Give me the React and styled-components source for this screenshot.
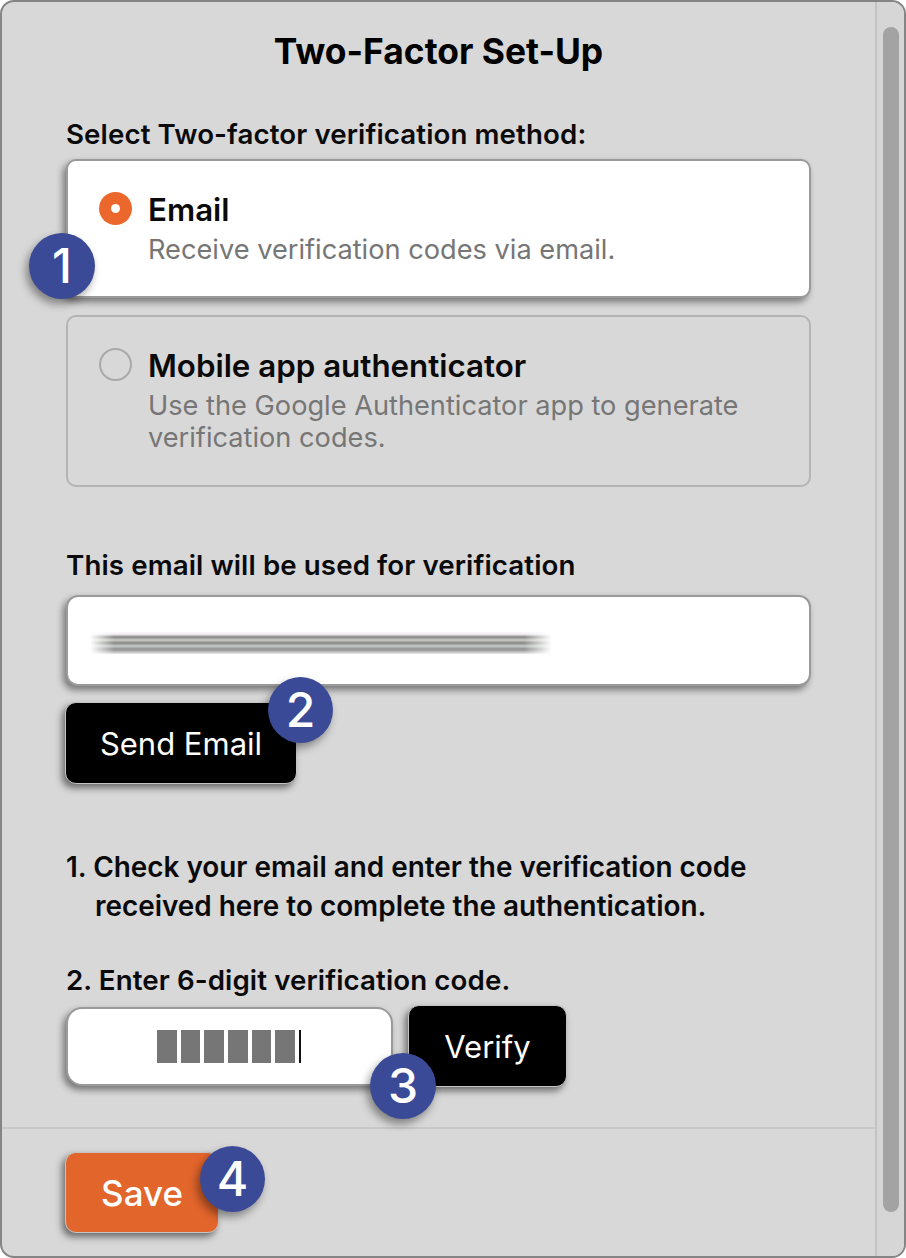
import styled, { createGlobalStyle } from 'styled-components';

const Global = createGlobalStyle`
  html, body { margin: 0; padding: 0; background: #fff; }
  body { font-family: Inter, "Liberation Sans", sans-serif; }
  * { box-sizing: border-box; }
`;

const Win = styled.div`
  width: 906px;
  height: 1258px;
  display: flex;
  background: #d8d8d8;
  border: 2px solid #858585;
  border-radius: 14px;
  overflow: hidden;
`;

const Main = styled.div`
  width: 875px;
  display: flex;
  flex-direction: column;
  border-right: 2px solid #c3c3c3;
`;

const Body = styled.div`
  flex: 1;
  padding: 0 64px;
  border-bottom: 2px solid #c8c8c8;
`;

const Title = styled.h1`
  margin: 29px -64px 0;
  text-align: center;
  font-size: 35.4px;
  line-height: 42px;
  font-weight: 700;
  color: #000;
`;

const Label = styled.div`
  margin-top: ${p => p.$top}px;
  font-size: 27.7px;
  line-height: 32px;
  font-weight: 600;
  letter-spacing: 0.1px;
  color: #0a0a0a;
`;

const Option = styled.div`
  position: relative;
  height: ${p => p.$h}px;
  margin-top: ${p => p.$top}px;
  padding: 30px 20px 0 31px;
  display: flex;
  gap: 16px;
  border-radius: 10px;
  background: ${p => (p.$on ? '#fff' : 'transparent')};
  border: 2px solid ${p => (p.$on ? '#9a9a9a' : '#b4b4b4')};
  box-shadow: ${p => (p.$on ? '-3px 4px 7px rgba(0,0,0,0.45)' : 'none')};
`;

const Radio = styled.span`
  flex: none;
  width: 33px;
  height: 33px;
  margin-top: 1px;
  border-radius: 50%;
  background: ${p => (p.$on ? '#ec672c' : 'transparent')};
  border: ${p => (p.$on ? 'none' : '2px solid #a9a9a9')};
  display: flex;
  align-items: center;
  justify-content: center;
  &::after {
    content: '';
    display: ${p => (p.$on ? 'block' : 'none')};
    width: 9px;
    height: 9px;
    border-radius: 50%;
    background: #fff;
  }
`;

const OptionName = styled.div`
  font-size: 31.3px;
  line-height: 38px;
  font-weight: 600;
  color: #0a0a0a;
`;

const OptionText = styled.div`
  margin-top: 5px;
  font-size: 27.2px;
  line-height: 32px;
  color: #767676;
`;

const Field = styled.div`
  position: relative;
  width: ${p => p.$w}px;
  height: ${p => p.$h}px;
  flex: none;
  background: #fff;
  border: 2px solid #9a9a9a;
  border-radius: 12px;
  box-shadow: -3px 4px 7px rgba(0,0,0,0.45);
`;

const FieldTop = styled(Field)`
  margin-top: 14px;
  padding: 35px 0 0 22px;
`;

const Smudge = styled.div`
  width: 462px;
  height: 22px;
  background: linear-gradient(180deg, #f4f2f4 0 4px, #5f5f5f 4px 6px, #c9c9c6 6px 10px, #6a6a6a 10px 12px, #c4c8c6 12px 16px, #7c7c7c 16px 18px, #b8b8b8 18px 21px, #ededed 21px 22px);
  filter: blur(1px);
  -webkit-mask-image: linear-gradient(90deg, transparent 0, #000 24px, #000 94%, transparent 100%);
  mask-image: linear-gradient(90deg, transparent 0, #000 24px, #000 94%, transparent 100%);
`;

const Button = styled.button`
  position: relative;
  display: block;
  flex: none;
  padding: 0;
  width: ${p => p.$w}px;
  height: ${p => p.$h}px;
  margin: ${p => p.$top || 0}px 0 0 -1px;
  border: 1.5px solid #c4c4c4;
  border-radius: 11px;
  background: ${p => p.$bg};
  color: #fff;
  font-family: inherit;
  font-size: ${p => p.$size || 31}px;
  font-weight: ${p => p.$weight || 400};
  box-shadow: -3px 4px 7px rgba(0,0,0,0.5);
`;

const Steps = styled.div`
  margin-top: 64px;
`;

const StepOne = styled.div`
  padding-left: 29px;
  text-indent: -29px;
  font-size: 27.9px;
  line-height: 39px;
  font-weight: 600;
  color: #0a0a0a;
`;

const CodeRow = styled.div`
  display: flex;
  align-items: flex-start;
  gap: 16px;
  margin-top: 9px;
`;

const CodeField = styled(Field)`
  margin-top: 2px;
  border-radius: 16px;
  display: flex;
  align-items: center;
  padding-left: 89px;
  gap: 4.2px;
`;

const CodeBox = styled.span`
  width: 19.5px;
  height: 33px;
  background: #767676;
`;

const Caret = styled.span`
  width: 2px;
  height: 33px;
  background: #111;
`;

const Footer = styled.div`
  height: 127px;
  padding: 23px 0 0 64px;
`;

const Track = styled.div`
  flex: 1;
  padding: 25px 5px 0 6px;
  background: #d6d6d6;
`;

const Thumb = styled.div`
  width: 16px;
  height: 1185px;
  border-radius: 8px;
  background: #a3a3a3;
`;

const Badge = styled.span`
  position: absolute;
  z-index: 2;
  left: ${p => p.$x}px;
  top: ${p => p.$y}px;
  width: ${p => p.$w || 66}px;
  height: 66px;
  border-radius: 50%;
  background: #3a4a97;
  color: #fff;
  font-size: 48px;
  font-weight: 500;
  line-height: 66px;
  text-align: center;
  text-indent: 0;
  box-shadow: -3px 5px 8px rgba(0,0,0,0.4);
`;

export default function App() {
  return (
    <>
      <Global />
      <Win>
        <Main>
          <Body>
            <Title>Two-Factor Set-Up</Title>
            <Label $top={45}>Select Two-factor verification method:</Label>
            <Option $on $h={139} $top={9}>
              <Radio $on />
              <div>
                <OptionName>Email</OptionName>
                <OptionText>Receive verification codes via email.</OptionText>
              </div>
              <Badge $x={-39} $y={72}>1</Badge>
            </Option>
            <Option $h={172} $top={17}>
              <Radio />
              <div>
                <OptionName>Mobile app authenticator</OptionName>
                <OptionText>Use the Google Authenticator app to generate verification codes.</OptionText>
              </div>
            </Option>
            <Label $top={62}>This email will be used for verification</Label>
            <FieldTop $w={745} $h={91}>
              <Smudge />
            </FieldTop>
            <Button $bg="#000" $w={232} $h={82} $top={16}>
              Send Email
              <Badge $x={202} $y={-26} $w={65}>2</Badge>
            </Button>
            <Steps>
              <StepOne>1. Check your email and enter the verification code received here to complete the authentication.</StepOne>
              <Label $top={38}>2. Enter 6-digit verification code.</Label>
            </Steps>
            <CodeRow>
              <CodeField $w={327} $h={79}>
                <CodeBox /><CodeBox /><CodeBox /><CodeBox /><CodeBox /><CodeBox /><Caret />
                <Badge $x={302} $y={44}>3</Badge>
              </CodeField>
              <Button $bg="#000" $w={159} $h={82}>Verify</Button>
            </CodeRow>
          </Body>
          <Footer>
            <Button $bg="#e2652c" $w={154} $h={81} $weight={500} $size={35}>
              Save
              <Badge $x={134} $y={-7} $w={65}>4</Badge>
            </Button>
          </Footer>
        </Main>
        <Track>
          <Thumb />
        </Track>
      </Win>
    </>
  );
}
